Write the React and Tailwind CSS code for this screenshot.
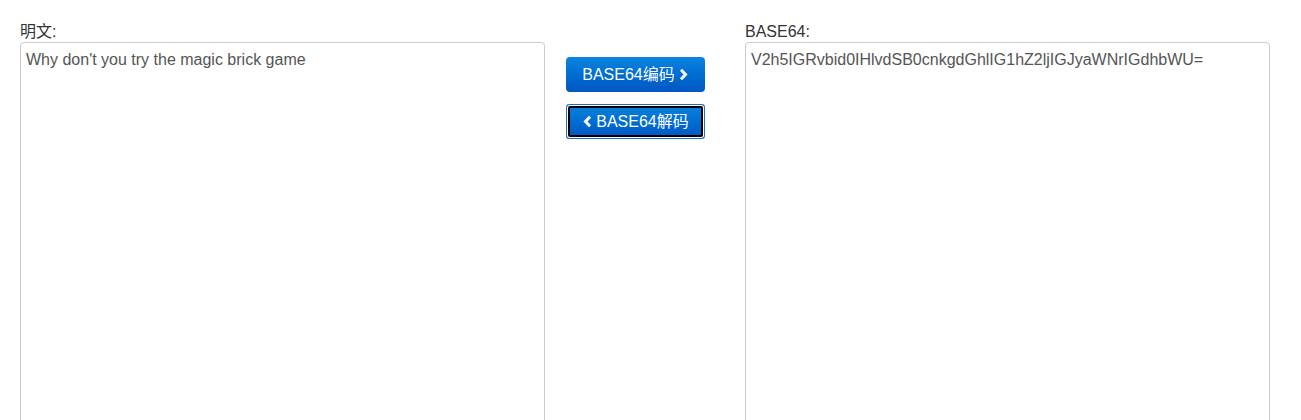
import { useState } from 'react'

const font = { fontFamily: '"Liberation Sans", "Noto Sans CJK SC", Arial, sans-serif' }

function Arrow({ dir }) {
  return (
    <svg width="11" height="13" viewBox="0 0 11 13" className="inline-block">
      {dir === 'right' ? (
        <path d="M3 1.8 L7.5 6.5 L3 11.2" stroke="#fff" strokeWidth="3" fill="none" strokeLinejoin="miter" />
      ) : (
        <path d="M8 1.8 L3.5 6.5 L8 11.2" stroke="#fff" strokeWidth="3" fill="none" strokeLinejoin="miter" />
      )}
    </svg>
  )
}

export default function App() {
  const [plain, setPlain] = useState("Why don't you try the magic brick game")
  const [b64, setB64] = useState('V2h5IGRvbid0IHlvdSB0cnkgdGhlIG1hZ2ljIGJyaWNrIGdhbWU=')

  const encode = () => {
    try { setB64(btoa(unescape(encodeURIComponent(plain)))) } catch (e) {}
  }
  const decode = () => {
    try { setPlain(decodeURIComponent(escape(atob(b64)))) } catch (e) {}
  }

  const btn =
    'w-[139px] h-[35px] rounded-[4px] bg-gradient-to-b from-[#0b84e0] to-[#0056c3] text-white text-[16px] flex items-center justify-center gap-[3px]'

  const area =
    'block w-[525px] h-[400px] border border-[#ccc] rounded-[4px] px-[5px] pt-[7px] text-[16px] leading-[20px] text-[#555] resize-none outline-none'

  return (
    <div className="bg-white h-[420px] overflow-hidden pt-[22px] pl-[20px] flex text-[#333]" style={font}>
      <div className="w-[525px] shrink-0">
        <div className="text-[16px] leading-[20px] h-[20px]">明文:</div>
        <textarea value={plain} onChange={e => setPlain(e.target.value)} className={area} style={font} />
      </div>
      <div className="w-[200px] shrink-0 pl-[21px] pt-[35px] flex flex-col gap-[12px]">
        <button onClick={encode} className={btn} style={font}>
          BASE64编码<Arrow dir="right" />
        </button>
        <button
          onClick={decode}
          className={btn + ' shadow-[inset_0_0_0_1px_#1b6ec2,inset_0_0_0_2px_#fff,inset_0_0_0_4px_#000]'}
          style={font}
        >
          <Arrow dir="left" />BASE64解码
        </button>
      </div>
      <div className="w-[525px] shrink-0">
        <div className="text-[16px] leading-[20px] h-[20px]">BASE64:</div>
        <textarea value={b64} onChange={e => setB64(e.target.value)} className={area} style={font} />
      </div>
    </div>
  )
}
